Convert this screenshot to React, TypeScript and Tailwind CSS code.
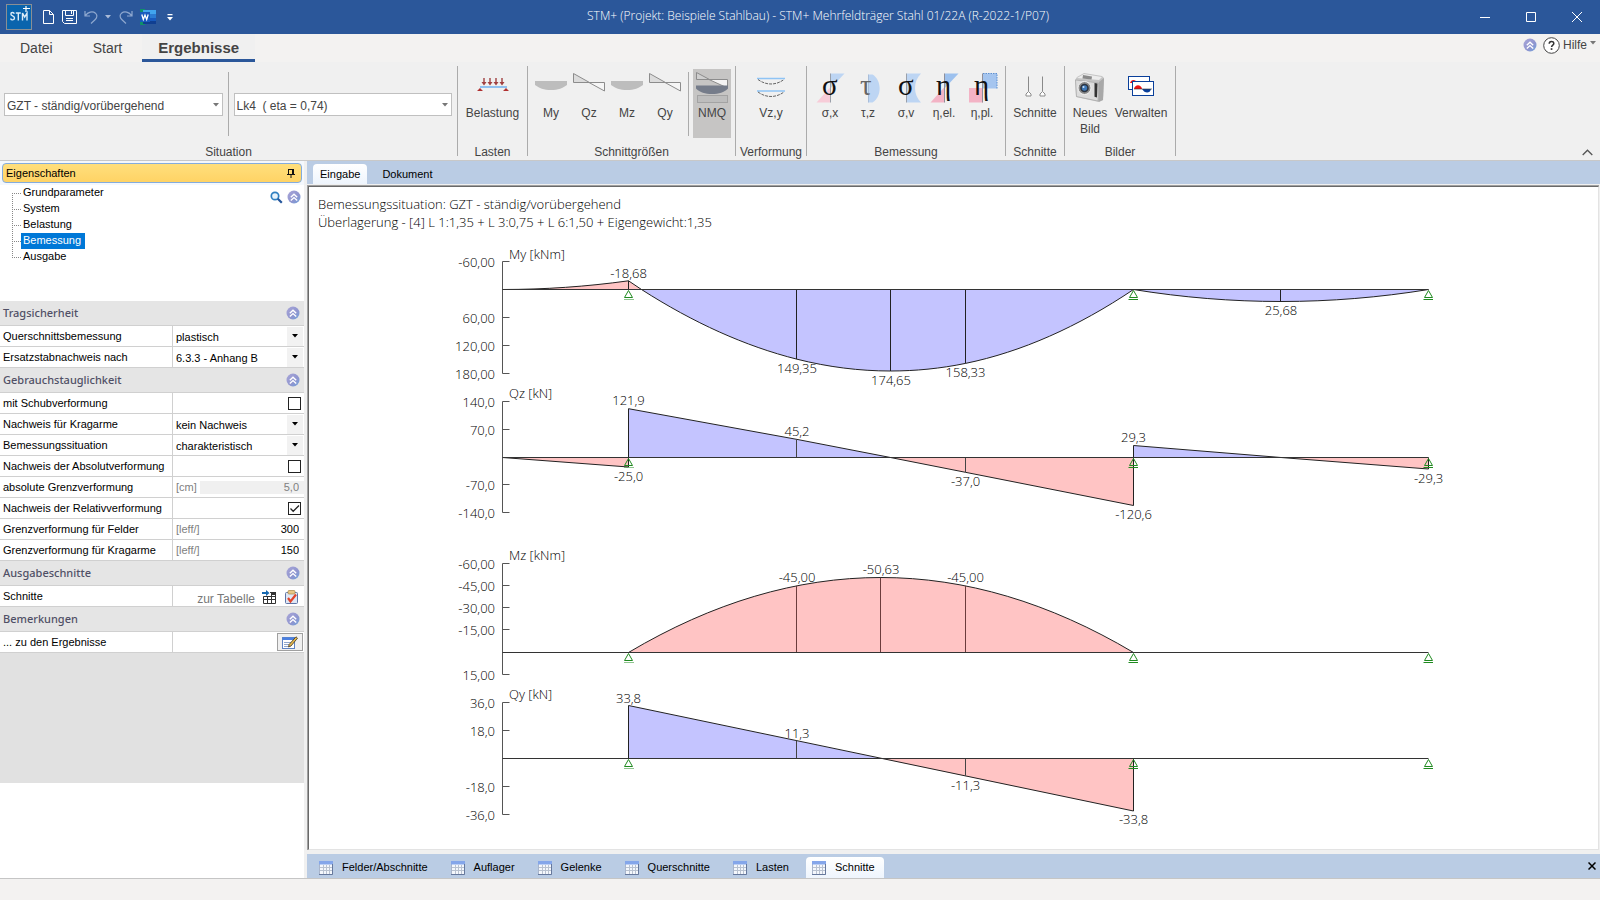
import type { ReactNode } from "react";

/* ---------- small shared icons ---------- */

function CollapseIcon() {
  return (
    <svg width="14" height="14" viewBox="0 0 14 14" aria-hidden="true">
      <defs>
        <linearGradient id="collapse-fill" x1="0" y1="0" x2="1" y2="1">
          <stop offset="0" stopColor="#a9a6d8" />
          <stop offset="0.6" stopColor="#8f95cf" />
          <stop offset="1" stopColor="#6fa3dd" />
        </linearGradient>
      </defs>
      <circle cx="7" cy="7" r="6.5" fill="url(#collapse-fill)" />
      <path d="M3.8 7.2 7 4.2l3.2 3M3.8 10.6 7 7.6l3.2 3" fill="none" stroke="#fff" strokeWidth="1.4" />
    </svg>
  );
}

function Caret({ className = "" }: { className?: string }) {
  return (
    <svg className={className} width="6" height="4" viewBox="0 0 6 4" aria-hidden="true">
      <path d="M0 0h6L3 3.4z" fill="currentColor" />
    </svg>
  );
}

/* ---------- title bar ---------- */

function TitleBar() {
  return (
    <header className="grid h-[34px] shrink-0 grid-cols-[1fr_auto_1fr] items-center bg-[#2b579a] text-white">
      <div className="flex items-center pl-1.5">
        <svg width="26" height="26" viewBox="0 0 26 26" role="img" aria-label="STM+">
          <rect x="0.5" y="0.5" width="25" height="25" fill="#0a64ad" stroke="#8a8f94" />
          <path
            d="M8.300 9.800C7.800 8 4.900 8 4.900 10c0 2.300 3.600 1.500 3.600 4 0 2.300-3.300 2.500-3.900.5M9.800 9h5M12.300 9v7.500M16.500 16.500V9l2.200 4L21 9v7.500"
            fill="none"
            stroke="#dcecf8"
            strokeWidth="1.400"
          />
          <path d="M20 2v6M17 4.500h7" stroke="#fff" strokeWidth="1.200" />
        </svg>
        <button type="button" aria-label="Neu" className="ml-[11px]">
          <svg width="11" height="14" viewBox="0 0 11 14" fill="none" stroke="#fff">
            <path d="M.5.5h6l4 4v9H.5zM6.500.5v4h4" />
          </svg>
        </button>
        <button type="button" aria-label="Speichern" className="ml-2">
          <svg width="16" height="15" viewBox="0 0 16 15" fill="none" stroke="#fff">
            <path d="M.5.5h14v13h-12l-2-2zM3.500.5v5h8v-5M9.500 1v3M4 8.500h7M4 10.500h7" />
          </svg>
        </button>
        <button type="button" aria-label="Rückgängig" className="ml-1.5 text-[#8fa8cf]">
          <svg width="14" height="14" viewBox="0 0 14 14" fill="none" stroke="currentColor" strokeWidth="1.200">
            <path d="M1 1v5h5M1.200 5.800C4 2 8.500.800 11.500 3.200c2.600 2.600 1 5.200-.5 6.600L7 13.500" />
          </svg>
        </button>
        <button type="button" aria-label="Rückgängig-Liste" className="ml-[7px] text-[#a9bad7]">
          <Caret />
        </button>
        <button type="button" aria-label="Wiederholen" className="ml-2 text-[#8fa8cf]">
          <svg width="14" height="14" viewBox="0 0 14 14" fill="none" stroke="currentColor" strokeWidth="1.200">
            <path d="M13 1v5H8M12.800 5.800C10 2 5.500.800 2.500 3.200c-2.600 2.600-1 5.200.5 6.600L7 13.500" />
          </svg>
        </button>
        <button type="button" aria-label="Word" className="ml-[7px]">
          <svg width="16" height="16" viewBox="0 0 16 16">
            <rect width="5" height="16" fill="#0f8f6a" />
            <rect x="3" y="1" width="13" height="4" fill="#41a5ee" />
            <rect x="3" y="5" width="13" height="4" fill="#2b7cd3" />
            <rect x="3" y="9" width="13" height="3" fill="#185abd" />
            <rect x="3" y="12" width="13" height="3" fill="#103f91" />
            <rect x="0" y="3" width="10" height="10" fill="#185abd" />
            <path d="M1.800 5.500 3.300 10.500 5 6l1.700 4.500 1.500-5" fill="none" stroke="#fff" strokeWidth="1.300" />
          </svg>
        </button>
        <button type="button" aria-label="Symbolleiste anpassen" className="ml-[11px]">
          <svg width="6" height="7" viewBox="0 0 6 7" fill="#fff">
            <path d="M.5 0h5v1.200h-5zM0 3h6L3 6.400z" />
          </svg>
        </button>
      </div>
      <h1 className="pb-0.5 pl-9 font-['Open_Sans',sans-serif] text-[12px] font-light">
        STM+ (Projekt: Beispiele Stahlbau) - STM+ Mehrfeldträger Stahl 01/22A (R-2022-1/P07)
      </h1>
      <div className="flex justify-end">
        <button type="button" aria-label="Minimieren" className="grid h-[34px] w-[46px] place-items-center">
          <svg width="10" height="10" viewBox="0 0 10 10"><path d="M0 5.500h10" stroke="#fff" /></svg>
        </button>
        <button type="button" aria-label="Maximieren" className="grid h-[34px] w-[46px] place-items-center">
          <svg width="10" height="10" viewBox="0 0 10 10"><path d="M.5.5h9v9h-9z" stroke="#fff" fill="none" /></svg>
        </button>
        <button type="button" aria-label="Schließen" className="grid h-[34px] w-[46px] place-items-center">
          <svg width="10" height="10" viewBox="0 0 10 10"><path d="M0 0l10 10M10 0 0 10" stroke="#fff" /></svg>
        </button>
      </div>
    </header>
  );
}

/* ---------- ribbon ---------- */

function RibbonTabs() {
  return (
    <nav className="flex h-7 shrink-0 items-stretch bg-[#f3f2f1] pl-0.5 text-[14px] text-[#444]">
      <button type="button" className="px-[18px]">Datei</button>
      <button type="button" className="ml-1 px-[18px]">Start</button>
      <button type="button" className="ml-0.5 border-b-[3px] border-[#2b579a] bg-[#f0f0f0] px-4 pt-[3px] text-[15px] leading-5 font-bold">
        Ergebnisse
      </button>
      <div className="ml-auto flex items-center pr-1 pb-1.5">
        <button type="button" aria-label="Alle einklappen" className="mr-1.5"><CollapseIcon /></button>
        <button type="button" className="flex items-center gap-[3px] text-[12px]">
          <svg width="17" height="17" viewBox="0 0 17 17" aria-hidden="true">
            <circle cx="8.500" cy="8.500" r="7.800" fill="#fff" stroke="#444" />
            <path d="M6.200 6.800c0-3.200 4.600-3 4.600-.4 0 1.700-2.200 1.700-2.200 3.600" fill="none" stroke="#333" strokeWidth="1.500" />
            <rect x="7.700" y="11.200" width="1.700" height="1.700" fill="#333" />
          </svg>
          Hilfe
          <Caret className="mb-1 text-[#777]" />
        </button>
      </div>
    </nav>
  );
}

function Group({ title, children, className = "" }: { title: string; children: ReactNode; className?: string }) {
  return (
    <section className={`my-1 flex flex-col border-r border-[#ababab] ${className}`}>
      <div className="flex flex-1 items-start justify-center pt-[3px]">{children}</div>
      <h2 className="-mb-1 text-center text-[12px] leading-4 whitespace-nowrap">{title}</h2>
    </section>
  );
}

function Tool({ label, icon, width = "w-[38px]", active = false }: { label: string; icon: ReactNode; width?: string; active?: boolean }) {
  return (
    <button
      type="button"
      className={`flex h-[69px] flex-col items-center pt-0.5 text-[12px] leading-4 ${width} ${active ? "bg-[#c6c5c4]" : ""}`}
    >
      <svg width="32" height="32" viewBox="0 0 32 32" aria-hidden="true" className="mb-0.5 shrink-0 overflow-visible">{icon}</svg>
      {label}
    </button>
  );
}

const loadIcon = (
  <g>
    <g stroke="#a04040" strokeWidth="1.400">
      <path d="M7 7v5M13 7v5M19 7v5M25 7v5" />
    </g>
    <path d="M4.500 11h5L7 14.500zM10.500 11h5L13 14.500zM16.500 11h5L19 14.500zM22.500 11h5L25 14.500z" fill="#a04040" />
    <path d="M3 16h27" stroke="#8fc0f0" strokeWidth="2" />
    <path d="M0 20l3-3 3 3zM26 20l3-3 3 3z" fill="#b03030" />
  </g>
);
const momentIcon = <path d="M0 10h32v4c-4 3-9 5-16 5S4 17 0 14z" fill="#bdbdbd" />;
const shearIcon = (
  <g stroke="#8c8c8c">
    <path d="M.5 2.500v9h16z" fill="#dcdcdc" />
    <path d="M16 11.500h15.500v8.500z" fill="#f6f6f6" />
  </g>
);
const allForcesIcon = (
  <g>
    <path d="M.5 1.500v7h13z" fill="#cfcfcf" stroke="#8c8c8c" />
    <path d="M13 8.500h18.500V17z" fill="#f4f4f4" stroke="#8c8c8c" />
    <path d="M0 14.500h32v3c-4 4-9 5.500-16 5.500S4 21.500 0 17.500z" fill="#757c8a" />
    <rect x="1.500" y="24.500" width="30" height="7" fill="#bdbdbd" stroke="#a3a3a3" />
  </g>
);
const deformIcon = (
  <g fill="none">
    <path d="M2 7.500h28M2 20h28" stroke="#8fc4f5" strokeWidth="1.600" />
    <path d="M3 8.500c8 6 18 6 26 0M3 21c8 6 18 6 26 0" stroke="#666" strokeDasharray="3 1" />
  </g>
);

function Greek({ fill = "#111", children }: { fill?: string; children: ReactNode }) {
  return (
    <text x="8" y="24" fontSize="29" fontWeight="400" fill={fill} fontFamily="Liberation Serif, serif">
      {children}
    </text>
  );
}

const sigmaX = (
  <g>
    <path d="M2.500 31.500h14V16z" fill="#f7ccd8" />
    <path d="M16.500 2.500h14l-14 15z" fill="#bdd5f3" />
    <path d="M16.500 2.500v29" stroke="#9aa0aa" />
    <Greek>σ</Greek>
  </g>
);
const tauZ = (
  <g>
    <path d="M16.500 3.500h4c9 5 10 22 0 28h-4z" fill="#bdd5f3" />
    <path d="M16.500 3.500v28" stroke="#a9bdd8" />
    <Greek fill="#666">τ</Greek>
  </g>
);
const sigmaV = (
  <g>
    <path d="M16.500 2.500h14.500c-8 8-8 21 0 29H16.500z" fill="#bdd5f3" />
    <path d="M16.500 2.500v29" stroke="#9aa0aa" />
    <Greek>σ</Greek>
  </g>
);
const etaEl = (
  <g>
    <path d="M2.500 31.500h14V16z" fill="#f3b3c5" />
    <path d="M16.500 2.500h14l-14 15z" fill="#9dc1ee" />
    <path d="M16.500 2.500v29" stroke="#8f8f9a" />
    <Greek>η</Greek>
  </g>
);
const etaPl = (
  <g>
    <rect x="3" y="17" width="14" height="14.500" fill="#f3b3c5" />
    <rect x="17" y="2.500" width="14" height="15" fill="#a5c5ef" />
    <path d="M17 2.500h14v15" fill="none" stroke="#5d8fd0" strokeDasharray="1.500 1" />
    <path d="M16.500 2.500v29" stroke="#8f8f9a" />
    <Greek>η</Greek>
  </g>
);
const cutIcon = (
  <g fill="none" stroke="#8a8a8a">
    <path d="M9.500 5.500v15M23.500 5.500v15" />
    <path d="M9.500 20.500l2.500 2.500v2H7v-2zM23.500 20.500l2.500 2.500v2h-5v-2z" fill="#fff" />
  </g>
);
const cameraIcon = (
  <g>
    <path d="M3 6l7-4 18 3 2 2-1 22-4 2L2 26 1 9z" fill="#c4c4c4" />
    <path d="M3 7l7-4 18 3-3 3z" fill="#ececec" />
    <path d="M1.500 9l23 3-.5 18L2.500 25.500z" fill="#dcdcdc" stroke="#a0a0a0" strokeWidth=".6" />
    <path d="M25 11l5-4-1 22-4.500 2z" fill="#a8a8a8" />
    <path d="M20.500 12l3 .5-.5 14-2.500-.7z" fill="#333" />
    <path d="M9 4l9 1.500-.5 3-9-1z" fill="#8a8a8a" />
    <circle cx="10.500" cy="17" r="6.500" fill="#8a8a8a" stroke="#f4f4f4" />
    <circle cx="10.500" cy="17" r="4.300" fill="#2c3440" />
    <circle cx="10.500" cy="17" r="2.700" fill="#3f79b8" />
    <circle cx="9.500" cy="16" r="1" fill="#cfe4f7" />
  </g>
);
const manageIcon = (
  <g>
    <rect x="3.500" y="5.500" width="21" height="13" fill="#fff" stroke="#0a3f9a" />
    <path d="M5 12c1-4 6-4 7 0z" fill="#e11" />
    <rect x="7.500" y="10.500" width="21" height="14" fill="#fff" stroke="#0a3f9a" />
    <path d="M9 18c1-5 7-5 8 0z" fill="#e11" />
    <path d="M17 18h9c-1 4.500-6 5-9 0z" fill="#0a3f9a" />
    <path d="M9 18h18" stroke="#333" strokeWidth=".6" />
  </g>
);

function RibbonSelect({ label, value }: { label: string; value: string }) {
  return (
    <div className="mt-1 grid flex-1 items-center">
      <select aria-label={label} className="col-start-1 row-start-1 h-[23px] w-full appearance-none border border-[#c0c0c0] bg-white px-0.5 pt-0.5 text-[12px]">
        <option>{value}</option>
      </select>
      <Caret className="pointer-events-none col-start-1 row-start-1 mr-1 justify-self-end text-[#777]" />
    </div>
  );
}

function Ribbon() {
  return (
    <div className="flex h-[99px] shrink-0 border-b border-[#c8c8c8] bg-[#f0f0f0] text-[#444]">
      <Group title="Situation" className="w-[458px]">
        <div className="flex flex-1 px-1 pr-[5px]">
          <RibbonSelect label="Bemessungssituation" value="GZT - ständig/vorübergehend" />
          <div className="mx-[5px] mt-[3px] h-16 w-px bg-[#ababab]" />
          <RibbonSelect label="Lastkombination" value="Lk4&nbsp; ( eta = 0,74)" />
        </div>
      </Group>
      <Group title="Lasten" className="w-[70px]">
        <Tool label="Belastung" icon={loadIcon} width="w-[60px]" />
      </Group>
      <Group title="Schnittgrößen" className="w-[208px]">
        <Tool label="My" icon={momentIcon} />
        <Tool label="Qz" icon={shearIcon} />
        <Tool label="Mz" icon={momentIcon} />
        <Tool label="Qy" icon={shearIcon} />
        <div className="mx-1 mt-[3px] h-16 w-px bg-[#ababab]" />
        <Tool label="NMQ" icon={allForcesIcon} active />
      </Group>
      <Group title="Verformung" className="w-[71px]">
        <Tool label="Vz,y" icon={deformIcon} />
      </Group>
      <Group title="Bemessung" className="w-[199px]">
        <Tool label="σ,x" icon={sigmaX} />
        <Tool label="τ,z" icon={tauZ} />
        <Tool label="σ,v" icon={sigmaV} />
        <Tool label="η,el." icon={etaEl} />
        <Tool label="η,pl." icon={etaPl} />
      </Group>
      <Group title="Schnitte" className="w-[59px]">
        <Tool label="Schnitte" icon={cutIcon} width="w-[50px]" />
      </Group>
      <Group title="Bilder" className="w-[111px]">
        <Tool label="Neues Bild" icon={cameraIcon} width="w-[42px]" />
        <Tool label="Verwalten" icon={manageIcon} width="w-[60px]" />
      </Group>
      <button type="button" aria-label="Menüband reduzieren" className="mr-[7px] mb-1 ml-auto self-end">
        <svg width="11" height="7" viewBox="0 0 11 7"><path d="M.7 6 5.500 1.200 10.300 6" fill="none" stroke="#555" strokeWidth="1.300" /></svg>
      </button>
    </div>
  );
}

/* ---------- property panel ---------- */

const treeItems = ["Grundparameter", "System", "Belastung", "Bemessung", "Ausgabe"];

function Section({ title, children }: { title: string; children: ReactNode }) {
  return (
    <section>
      <div className="flex h-[25px] items-center justify-between border-b border-[#d0d0d0] bg-[#e5e5e5] pr-1 pl-[3px]">
        <h3 className="font-['Noto_Sans',sans-serif] text-[11px] font-medium text-[#505066]">{title}</h3>
        <button type="button" aria-label={`${title} einklappen`}><CollapseIcon /></button>
      </div>
      {children}
    </section>
  );
}

function Row({ id, label, children }: { id: string; label: string; children: ReactNode }) {
  return (
    <div className="grid h-[21px] grid-cols-[172px_1fr] border-b border-[#d0d0d0] bg-white">
      <label htmlFor={id} className="pl-[3px] leading-5 whitespace-nowrap">{label}</label>
      <div className="flex items-center border-l border-[#d0d0d0]">{children}</div>
    </div>
  );
}

function SelectRow({ id, label, value }: { id: string; label: string; value: string }) {
  return (
    <Row id={id} label={label}>
      <div className="grid h-full flex-1 grid-cols-[1fr_16px] items-center pr-px">
        <select id={id} className="col-span-2 col-start-1 row-start-1 h-full appearance-none bg-transparent pt-0.5 pl-[3px]">
          <option>{value}</option>
        </select>
        <span className="pointer-events-none col-start-2 row-start-1 grid h-[19px] place-items-center bg-black/5">
          <Caret className="text-black" />
        </span>
      </div>
    </Row>
  );
}

function CheckRow({ id, label, checked = false }: { id: string; label: string; checked?: boolean }) {
  return (
    <Row id={id} label={label}>
      <span className="mr-[3px] ml-auto grid">
        <input id={id} type="checkbox" defaultChecked={checked} className="peer col-start-1 row-start-1 size-[13px] appearance-none border border-[#222] bg-white" />
        <svg className="pointer-events-none invisible col-start-1 row-start-1 peer-checked:visible" width="13" height="13" viewBox="0 0 13 13">
          <path d="M2.500 6.500 5.200 9.300 11 3.500" fill="none" stroke="#222" strokeWidth="1.300" />
        </svg>
      </span>
    </Row>
  );
}

function NumberRow({ id, label, unit, value, disabled = false }: { id: string; label: string; unit: string; value: string; disabled?: boolean }) {
  return (
    <Row id={id} label={label}>
      <span className="w-[27px] pl-[3px] text-[#808080]">{unit}</span>
      <input
        id={id}
        defaultValue={value}
        disabled={disabled}
        className="h-[13px] w-0 flex-1 pr-[5px] text-right disabled:bg-[#f0f0f0] disabled:text-[#808080]"
      />
    </Row>
  );
}

function PropertyPanel() {
  return (
    <aside className="flex w-[304px] shrink-0 flex-col bg-white text-[11px] text-black">
      <div className="bg-[#f4f8fd] px-0.5 py-0.5">
        <div className="flex h-5 items-center justify-between rounded-sm border border-[#84acdd] bg-linear-to-b from-[#ffdf7c] to-[#ffd365] pr-1.5 pl-[3px]">
          <h2>Eigenschaften</h2>
          <button type="button" aria-label="Anheften">
            <svg width="8" height="9" viewBox="0 0 8 9"><path d="M1.500 0v5M6.500 0v5M1.500.5h5M0 5.500h8M4 5.500V9M5.500 0v5" stroke="#111" fill="none" /></svg>
          </button>
        </div>
      </div>
      <div className="flex h-[116px] items-start justify-between">
        <ul className="ml-3">
          {treeItems.map((t, i) => (
            <li key={t} className="flex h-4 items-stretch">
              <svg width="9" height="16" viewBox="0 0 9 16" aria-hidden="true" stroke="#888" strokeDasharray="1 1">
                <path d={i === 0 ? "M.5 8v8" : i === treeItems.length - 1 ? "M.5 0v8" : "M.5 0v16"} />
                <path d="M0 8.500h9" />
              </svg>
              <a href="#" aria-current={t === "Bemessung"} className="px-0.5 pr-1 leading-[15px] aria-[current=true]:bg-[#0078d7] aria-[current=true]:text-white">
                {t}
              </a>
            </li>
          ))}
        </ul>
        <div className="mt-[5px] mr-[3px] flex items-center gap-1">
          <button type="button" aria-label="Suchen">
            <svg width="13" height="13" viewBox="0 0 13 13">
              <circle cx="5" cy="5" r="3.700" fill="#e8f3fb" stroke="#2f7fc0" strokeWidth="1.700" />
              <path d="M7.800 7.800 11.800 11.800" stroke="#24559b" strokeWidth="2.200" />
            </svg>
          </button>
          <button type="button" aria-label="Baum einklappen"><CollapseIcon /></button>
        </div>
      </div>
      <Section title="Tragsicherheit">
        <SelectRow id="qb" label="Querschnittsbemessung" value="plastisch" />
        <SelectRow id="en" label="Ersatzstabnachweis nach" value="6.3.3 - Anhang B" />
      </Section>
      <Section title="Gebrauchstauglichkeit">
        <CheckRow id="sv" label="mit Schubverformung" />
        <SelectRow id="nk" label="Nachweis für Kragarme" value="kein Nachweis" />
        <SelectRow id="bs" label="Bemessungssituation" value="charakteristisch" />
        <CheckRow id="na" label="Nachweis der Absolutverformung" />
        <NumberRow id="ag" label="absolute Grenzverformung" unit="[cm]" value="5,0" disabled />
        <CheckRow id="nr" label="Nachweis der Relativverformung" checked />
        <NumberRow id="gf" label="Grenzverformung für Felder" unit="[leff/]" value="300" />
        <NumberRow id="gk" label="Grenzverformung für Kragarme" unit="[leff/]" value="150" />
      </Section>
      <Section title="Ausgabeschnitte">
        <Row id="st" label="Schnitte">
          <button id="st" type="button" className="ml-auto flex items-center gap-[7px] text-[12px] text-[#777]">
            <span className="pt-1">zur Tabelle</span>
            <svg width="14" height="14" viewBox="0 0 14 14" aria-hidden="true">
              <path d="M1.500 6.500h12v7h-12zM1.500 9.500h12M5.500 6v7.500M9.500 4v9.500M8 2.500h5.500V7M9 4.500h4.500" fill="none" stroke="#333" />
              <path d="M9 2h5v2H9z" fill="#333" />
              <path d="M0 2h4V0l3.500 3L4 6V4H0z" fill="#1668b0" />
            </svg>
          </button>
          <button type="button" aria-label="Schnitte prüfen" className="mr-1.5 ml-[9px]">
            <svg width="13" height="14" viewBox="0 0 13 14">
              <rect x=".5" y="2.500" width="12" height="11" rx="1" fill="#dfe7f5" stroke="#5f75a6" />
              <rect x="3" y=".5" width="7" height="3.500" rx="1" fill="#e8c887" stroke="#a98645" strokeWidth=".7" />
              <path d="M3 8l2.500 3.500L11 4.500" fill="none" stroke="#e2432a" strokeWidth="2.200" />
            </svg>
          </button>
        </Row>
      </Section>
      <Section title="Bemerkungen">
        <Row id="be" label="... zu den Ergebnisse">
          <button id="be" type="button" aria-label="Bemerkungen bearbeiten" className="mr-px ml-auto grid h-[18px] w-[26px] place-items-center border border-[#a0a0a0] bg-[#f0f0f0]">
            <svg width="16" height="13" viewBox="0 0 16 13">
              <rect x=".5" y="1.500" width="12" height="11" fill="#fff" stroke="#5f84c4" />
              <path d="M.5 1.500h12v2.500H.5z" fill="#4a7fe0" />
              <path d="M2 6.500h7M2 8.500h5M2 10.500h4" stroke="#8fa6cc" />
              <path d="M14 .8 15.500 2.200 9 10l-2.500 1 .6-2.500z" fill="#e6b84d" stroke="#3b3320" strokeWidth=".8" />
            </svg>
          </button>
        </Row>
      </Section>
      <div className="h-[130px] bg-[#e1e1e1]" />
    </aside>
  );
}

/* ---------- diagrams ---------- */

const BLUE = "#c4c4ff";
const RED = "#ffc4c4";
const X0 = 502.5;
const A = 628.5;
const B = 1133.5;
const C = 1428.5;
const P1 = 797;
const P3 = 965.5;

type Knot = [x: number, y: number, slope: number];

/* Smooth curve through knots with given end slopes (cubic Hermite segments). */
function curve(knots: Knot[]) {
  let d = `M${knots[0][0]} ${knots[0][1]}`;
  for (let i = 1; i < knots.length; i++) {
    const [xa, ya, sa] = knots[i - 1];
    const [xb, yb, sb] = knots[i];
    const h = (xb - xa) / 3;
    d += ` C${xa + h} ${ya + sa * h} ${xb - h} ${yb - sb * h} ${xb} ${yb}`;
  }
  return d;
}

function Support({ x, y, fixed = false }: { x: number; y: number; fixed?: boolean }) {
  return (
    <g stroke="#1f8a1f" fill="none">
      <path d={`M${x} ${y + 1}L${x - 4} ${y + 8}H${x + 4}Z`} />
      <path d={fixed ? `M${x - 4} ${y + 10}h9` : `M${x - 5} ${y + 10}h9.500`} strokeDasharray={fixed ? "1 1" : undefined} />
    </g>
  );
}

function Axis({ title, titleY, zero, ticks }: { title: string; titleY: number; zero: number; ticks: [string, number][] }) {
  return (
    <g>
      <path
        d={`M${X0} ${ticks[0][1]}V${ticks[ticks.length - 1][1]}` + ticks.map(([, y]) => `M${X0} ${y}h7`).join("")}
        stroke="#555"
        fill="none"
      />
      <path d={`M${X0} ${zero}H${C}`} stroke="#333" />
      <text x="509" y={titleY + 5}>{title}</text>
      {ticks.map(([t, y]) => (
        <text key={t} x="495" y={y + 5} textAnchor="end">{t}</text>
      ))}
    </g>
  );
}

function Labels({ items }: { items: [string, number, number][] }) {
  return (
    <g textAnchor="middle">
      {items.map(([t, x, y]) => (
        <text key={`${t}${x}`} x={x} y={y + 5}>{t}</text>
      ))}
    </g>
  );
}

function Supports({ y }: { y: number }) {
  return (
    <g>
      <Support x={A} y={y} fixed />
      <Support x={B} y={y} />
      <Support x={C} y={y} />
    </g>
  );
}

function Diagrams() {
  const k = 0.00557;
  const field: Knot[] = [
    [641.5, 289.5, 115 * k],
    [P1, 359.2, 45.2 * k],
    [890.5, 371, 0],
    [P3, 363.4, -37 * k],
    [B, 289.5, -120.6 * k],
  ];
  const mz: Knot[] = [
    [A, 652.5, -0.594],
    [881, 577.5, 0],
    [B, 652.5, 0.594],
  ];
  return (
    <svg
      viewBox="309 232 1289 616"
      className="block w-full"
      role="img"
      aria-label="Schnittgrößenverläufe My, Qz, Mz und Qy"
      fontFamily="Open Sans, Noto Sans, sans-serif"
      fontSize="13"
      fontWeight="300"
      fill="#000"
    >
      <g stroke="none">
        <path d={`${curve([[X0, 289.5, 0], [A, 280.8, -0.139]])}L641.500 289.500Z`} fill={RED} />
        <path d={`${curve(field)}Z`} fill={BLUE} />
        <path d={`${curve([[B, 289.5, 0.163], [1281, 301.5, 0], [C, 289.5, -0.163]])}Z`} fill={BLUE} />

        <path d={`M${X0} 457.500L${A} 467V457.500Z`} fill={RED} />
        <path d={`M${A} 408.700L${P1} 439.400L890.500 457.500H${A}Z`} fill={BLUE} />
        <path d={`M890.500 457.500L${P3} 472.300L${B} 505.500V457.500Z`} fill={RED} />
        <path d={`M${B} 445.500L1281 457.500H${B}Z`} fill={BLUE} />
        <path d={`M1281 457.500L${C} 469V457.500Z`} fill={RED} />

        <path d={`${curve(mz)}Z`} fill={RED} />

        <path d={`M${A} 705.500L881 758.500H${A}Z`} fill={BLUE} />
        <path d={`M881 758.500L${B} 811V758.500Z`} fill={RED} />
      </g>

      <g fill="none" stroke="#222">
        <path d={`${curve([[X0, 289.5, 0], [A, 280.8, -0.139]])}L641.500 289.500M${A} 280.800V289.500`} />
        <path d={`${curve(field)}M${P1 - 0.5} 289.500V359M890.500 289.500V371M${P3} 289.500V363.400`} />
        <path d={`${curve([[B, 289.5, 0.163], [1281, 301.5, 0], [C, 289.5, -0.163]])}M1280.500 289.500V301.500`} />

        <path d={`M${X0} 457.500L${A} 467V408.700L${P1} 439.400L890.500 457.500L${P3} 472.300L${B} 505.500V445.500L1281 457.500L${C} 469V457.500`} />
        <path d={`M${P1 - 0.5} 439.400V457.500M${P3} 457.500V472.300`} stroke="#444" />

        <path d={curve(mz)} />
        <path d={`M${P1 - 0.5} 652.500V585.800M880.500 652.500V577.500M${P3} 652.500V585.800`} stroke="#6b3c3c" />

        <path d={`M${A} 758.500V705.500L${B} 811V758.500`} />
        <path d={`M${P1 - 0.5} 741V758.500M${P3} 758.500V775.700`} stroke="#444" />
      </g>

      <Axis title="My [kNm]" titleY={254} zero={289.5} ticks={[["-60,00", 261.5], ["60,00", 317.5], ["120,00", 345.5], ["180,00", 373.5]]} />
      <Axis title="Qz [kN]" titleY={393} zero={457.5} ticks={[["140,0", 401.5], ["70,0", 429.5], ["-70,0", 484.5], ["-140,0", 512.5]]} />
      <Axis title="Mz [kNm]" titleY={555} zero={652.5} ticks={[["-60,00", 563.5], ["-45,00", 585.5], ["-30,00", 607.5], ["-15,00", 629.5], ["15,00", 674.5]]} />
      <Axis title="Qy [kN]" titleY={694} zero={758.5} ticks={[["36,0", 702.5], ["18,0", 730.5], ["-18,0", 786.5], ["-36,0", 814.5]]} />

      <Labels
        items={[
          ["-18,68", A, 273], ["149,35", P1, 368], ["174,65", 891, 380], ["158,33", P3, 372], ["25,68", 1281, 310],
          ["121,9", A, 400], ["-25,0", A, 476], ["45,2", P1, 431], ["-37,0", P3, 481], ["29,3", B, 437], ["-120,6", B, 514], ["-29,3", C, 478],
          ["-45,00", P1, 577], ["-50,63", 881, 569], ["-45,00", P3, 577],
          ["33,8", A, 698], ["11,3", P1, 733], ["-11,3", P3, 785], ["-33,8", B, 819],
        ]}
      />

      <Supports y={289.5} />
      <Supports y={457.5} />
      <Supports y={652.5} />
      <Supports y={758.5} />
    </svg>
  );
}

/* ---------- main area ---------- */

function TableIcon() {
  return (
    <svg width="14" height="14" viewBox="0 0 14 14" aria-hidden="true">
      <rect x=".5" y=".5" width="13" height="13" fill="#f4f7fc" stroke="#a9b5cb" />
      <path d="M0 0h14v3.500H0z" fill="#84a6ea" />
      <path d="M1 6.500h12M1 9.500h12M4.500 4v9M7.500 4v9M10.500 4v9" stroke="#b9c2d0" />
      <path d="M13.500 3v10.500H0" stroke="#66789c" fill="none" />
    </svg>
  );
}

const sheetTabs = ["Felder/Abschnitte", "Auflager", "Gelenke", "Querschnitte", "Lasten", "Schnitte"];

function Workspace() {
  return (
    <main className="ml-[3px] flex min-w-0 flex-1 flex-col">
      <div role="tablist" className="flex h-[23px] shrink-0 items-end bg-[#bacce4] pl-1.5 text-[11px] text-black">
        <button type="button" role="tab" aria-selected="true" className="h-5 rounded-t-sm bg-linear-to-b from-white to-[#eef5fd] px-[7px]">
          Eingabe
        </button>
        <button type="button" role="tab" aria-selected="false" className="ml-[7px] h-5 px-2">Dokument</button>
      </div>
      <div className="mt-px mr-px flex flex-1 flex-col border-t border-l border-[#a0a0a0]">
        <div className="flex-1 border-t border-r border-b border-l border-t-[#696969] border-r-[#e3e3e3] border-b-[#e3e3e3] border-l-[#696969] bg-white">
          <div className="pt-2 pb-px pl-[9px] font-['Open_Sans',sans-serif] text-[13px] leading-[18px] font-light">
            <p>Bemessungssituation: GZT - ständig/vorübergehend</p>
            <p>Überlagerung - [4] L 1:1,35 + L 3:0,75 + L 6:1,50 + Eigengewicht:1,35</p>
          </div>
          <Diagrams />
        </div>
      </div>
      <div role="tablist" className="mt-1 flex h-6 shrink-0 items-end gap-2 bg-[#bacce4] pl-1.5 text-[11px] text-black">
        {sheetTabs.map((t) => (
          <button
            key={t}
            type="button"
            role="tab"
            aria-selected={t === "Schnitte"}
            className="flex h-[21px] items-center gap-[9px] rounded-t-sm px-1.5 pr-[9px] aria-selected:bg-linear-to-b aria-selected:from-white aria-selected:to-[#eef5fd]"
          >
            <TableIcon />
            {t}
          </button>
        ))}
        <button type="button" aria-label="Tabelle schließen" className="mr-1 ml-auto self-center">
          <svg width="8" height="8" viewBox="0 0 8 8"><path d="M.5.5l7 7M7.500.5l-7 7" stroke="#000" strokeWidth="1.500" /></svg>
        </button>
      </div>
    </main>
  );
}

export default function App() {
  return (
    <div className="flex min-h-screen flex-col bg-[#f0f0f0] font-['Liberation_Sans',Arial,sans-serif]">
      <TitleBar />
      <RibbonTabs />
      <Ribbon />
      <div className="flex flex-1">
        <PropertyPanel />
        <Workspace />
      </div>
      <footer className="h-[22px] shrink-0 border-t border-[#c5c5c5] bg-[#f3f2f1]" />
    </div>
  );
}
